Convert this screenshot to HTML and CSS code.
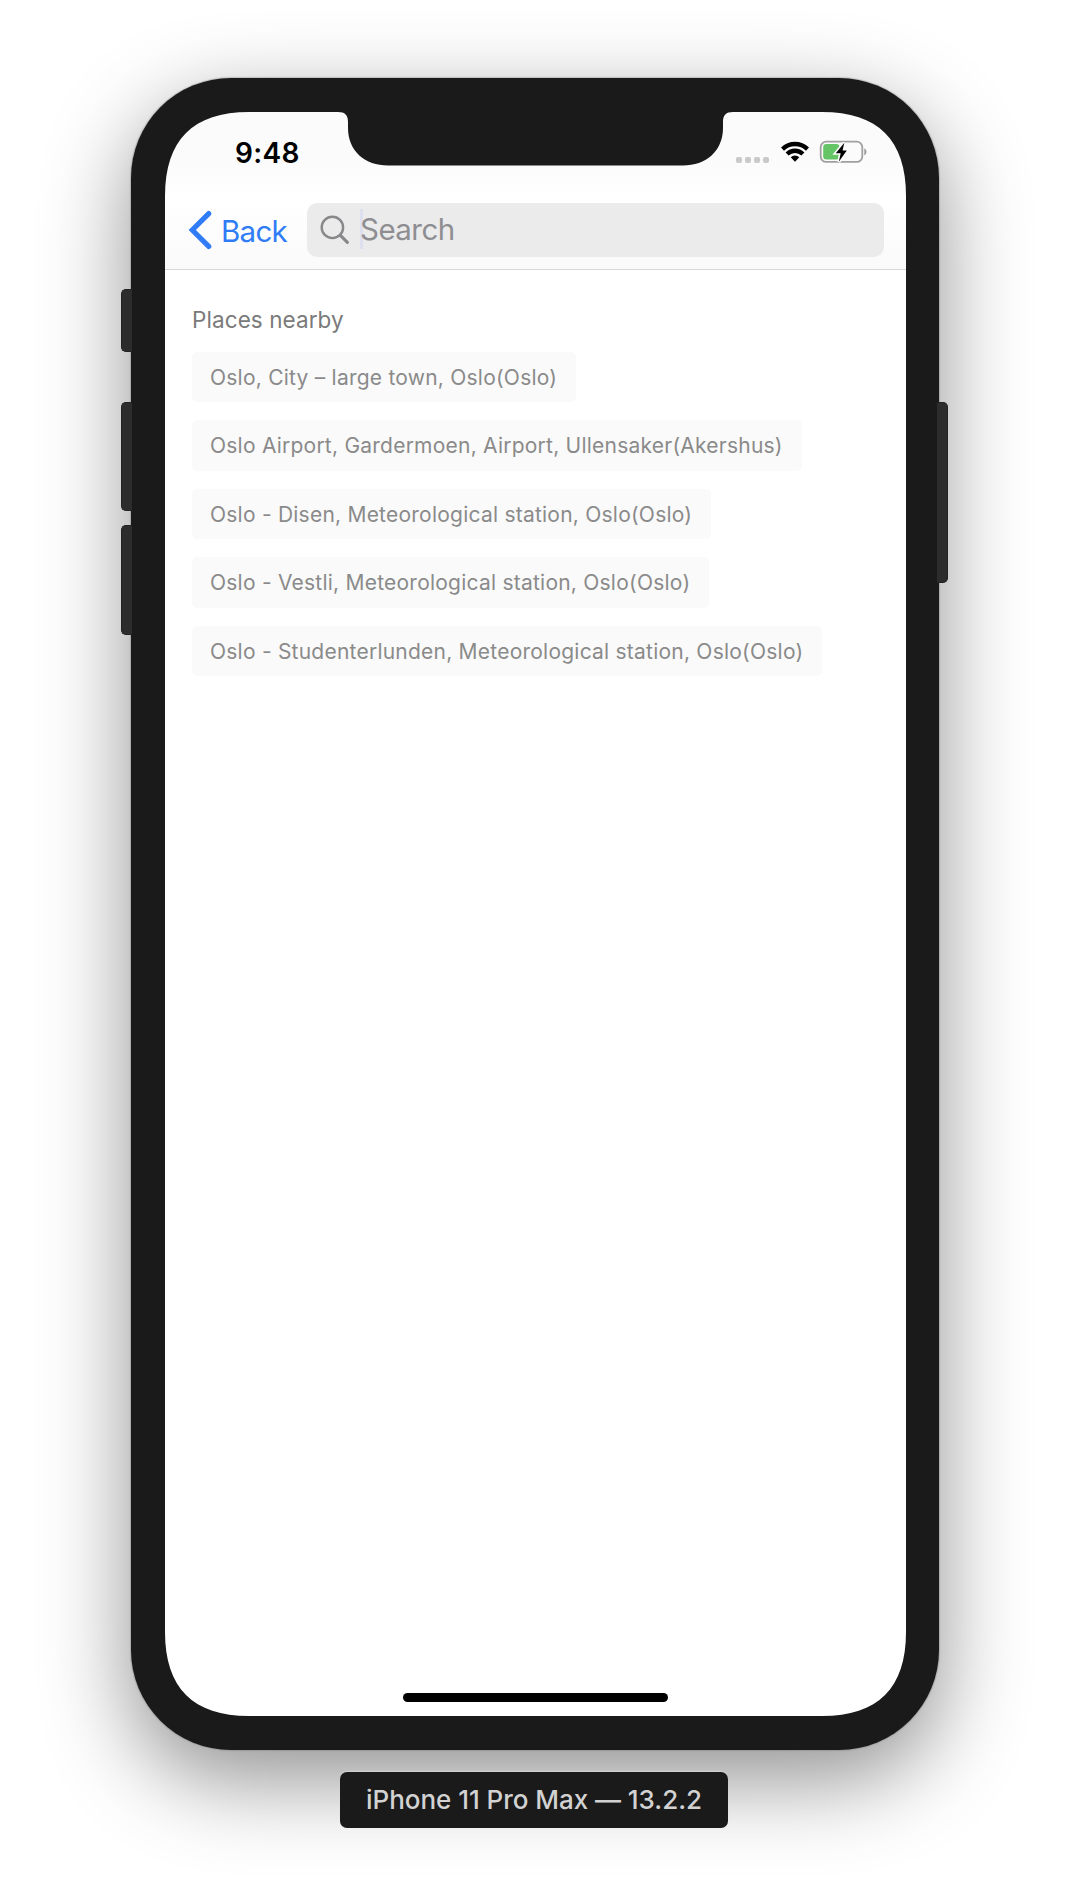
FILE: index.html
```html
<!DOCTYPE html>
<html lang="en">
<head>
<meta charset="utf-8">
<title>Search</title>
<link rel="stylesheet" href="styles.css">
</head>
<body>
<div class="phone">
  <span class="key mute"></span>
  <span class="key volume-up"></span>
  <span class="key volume-down"></span>
  <span class="key power"></span>
  <main class="screen">
    <header class="header">
      <div class="status">
        <span class="time">9:48</span>
        <div class="indicators">
          <span class="signal"><i></i><i></i><i></i><i></i></span>
          <svg class="wifi" width="30" height="22" viewBox="0 0 30 22">
            <path d="M1 7.5A20 20 0 0 1 29 7.5L26 10.7A16 16 0 0 0 4 10.7Z"/>
            <path d="M5.6 12.4A13.3 13.3 0 0 1 24.4 12.4L21.4 15.6A9.2 9.2 0 0 0 8.6 15.6Z"/>
            <path d="M10.7 17.3A6.3 6.3 0 0 1 19.3 17.3L15 21.8Z"/>
          </svg>
          <svg class="battery" width="48" height="24" viewBox="0 0 48 24">
            <rect x="1.7" y="1.7" width="41.6" height="20.2" rx="5.5" fill="none" stroke="#a0a0a0" stroke-width="1.8"/>
            <path d="M45.3 8.2Q47.5 9.4 47.5 11.8T45.3 15.4Z" fill="#9a9a9a"/>
            <rect x="4.2" y="4.1" width="16.3" height="15.4" rx="3.2" fill="#65c466"/>
            <path d="M25.3 2.8 16.8 13.2H21.7L19.8 21.8 27.8 10.5H23.6Z" fill="#000" stroke="#fcfcfc" stroke-width="3.2" paint-order="stroke"/>
          </svg>
        </div>
      </div>
      <div class="navbar">
        <a class="back">
          <svg width="24" height="40" viewBox="0 0 24 40"><path d="M20.7 3.6 4.3 20 20.7 36.4" fill="none" stroke="#2f7cf6" stroke-width="5.2" stroke-linecap="round"/></svg>
          <span>Back</span>
        </a>
        <div class="search">
          <svg width="30" height="30" viewBox="0 0 30 30" fill="none" stroke="#88888b" stroke-linecap="round"><circle cx="12.4" cy="12.4" r="10.7" stroke-width="2.4"/><path d="m20.4 20.4 7 7" stroke-width="3.1"/></svg>
          <span class="placeholder">Search</span>
        </div>
      </div>
    </header>
    <section class="places">
      <h1 class="title">Places nearby</h1>
      <ul class="list">
        <li>Oslo, City – large town, Oslo(Oslo)</li>
        <li>Oslo Airport, Gardermoen, Airport, Ullensaker(Akershus)</li>
        <li>Oslo - Disen, Meteorological station, Oslo(Oslo)</li>
        <li>Oslo - Vestli, Meteorological station, Oslo(Oslo)</li>
        <li>Oslo - Studenterlunden, Meteorological station, Oslo(Oslo)</li>
      </ul>
    </section>
    <div class="home-bar"></div>
  </main>
  <svg class="bezel" width="741" height="1604" viewBox="0 0 741 1604" fill="#1a1a1a">
    <path d="M0 0H84C28 0 0 28 0 84ZM741 0H657C713 0 741 28 741 84ZM0 1604H84C28 1604 0 1576 0 1520ZM741 1604H657C713 1604 741 1576 741 1520Z"/>
    <path d="M173 0C180 0 183 3 183 10V16C183 39 200 53.5 223 53.5H518C541 53.5 558 39 558 16V10C558 3 561 0 568 0Z"/>
  </svg>
</div>
<div class="device-label"><span>iPhone 11 Pro Max — 13.2.2</span></div>
</body>
</html>
```

FILE: styles.css
```css
* { box-sizing: border-box; }
body {
  margin: 0;
  height: 1900px;
  padding-top: 78px;
  background: #fff;
  font-family: Inter, "Liberation Sans", sans-serif;
  display: flex;
  flex-direction: column;
  align-items: center;
  overflow: hidden;
}
.phone {
  position: relative;
  flex: none;
  width: 808px;
  height: 1672px;
  padding: 34px 33px 34px 34px;
  border-radius: 100px;
  background: #1a1a1a;
  box-shadow: 0 0 1px 1px rgba(120, 120, 120, .35), 0 29px 88px rgba(0, 0, 0, .44);
}
.key {
  position: absolute;
  z-index: 1;
  left: -10px;
  width: 11px;
  border: 1px solid #222;
  border-right: 0;
  border-radius: 5px 0 0 5px;
  background: #2c2c2c;
}
.mute { top: 211px; height: 63px; }
.volume-up { top: 324px; height: 109px; }
.volume-down { top: 447px; height: 110px; }
.power {
  top: 324px;
  left: auto;
  right: -9px;
  width: 11px;
  height: 181px;
  border: 1px solid #222;
  border-left: 0;
  border-radius: 0 5px 5px 0;
}
.screen {
  height: 1604px;
  display: flex;
  flex-direction: column;
  background: #fff;
}
.bezel { position: absolute; left: 34px; top: 34px; }
.header {
  height: 158px;
  border-bottom: 1px solid #d9d9d9;
  background: linear-gradient(#fbfbfb 0, #fbfbfb 50px, #fff 90px, #fdfdfd 115px, #fafafa 157px);
}
.status {
  height: 91px;
  padding: 24px 39px 0 70px;
  display: flex;
  justify-content: space-between;
  align-items: flex-start;
}
.time { font-size: 28px; line-height: 34px; font-weight: 600; letter-spacing: .3px; }
.indicators { display: flex; align-items: flex-start; padding-top: 4px; }
.signal { display: flex; gap: 3px; padding: 17px 11px 0 0; }
.signal i { width: 6px; height: 6px; border-radius: 2px; background: #c9c9c9; }
.wifi { margin-right: 9px; }
.navbar { display: flex; padding: 0 22px 0 23px; }
.back {
  width: 119px;
  height: 54px;
  display: flex;
  align-items: center;
  gap: 9px;
  color: #2f7cf6;
  font-size: 29.5px;
  letter-spacing: -.7px;
}
.back span { padding-top: 2px; }
.search {
  flex: 1;
  height: 54px;
  padding-left: 13px;
  display: flex;
  align-items: center;
  gap: 10px;
  border-radius: 10px;
  background: #ebebeb;
}
.placeholder {
  margin-bottom: 2px;
  color: #8e8e92;
  font-size: 29.5px;
  line-height: 40px;
  letter-spacing: -.55px;
  background: linear-gradient(#dfe0ef, #dfe0ef) 0 0 / 3px 100% no-repeat;
}
.places { flex: 1; padding: 34px 27px 0; }
.title {
  margin: 0 0 15.5px;
  color: #7a7a7a;
  font-size: 22.5px;
  line-height: 32px;
  font-weight: 400;
  letter-spacing: .08px;
}
.list {
  margin: 0;
  padding: 0;
  list-style: none;
  display: flex;
  flex-direction: column;
  align-items: flex-start;
  gap: 18px;
}
.list li {
  height: 50.5px;
  padding: 0 19px 0 18px;
  border-radius: 5px;
  background: #fafafa;
  color: #8a8a8a;
  font-size: 21px;
  line-height: 51.5px;
  letter-spacing: .23px;
  white-space: nowrap;
}
.home-bar {
  width: 265px;
  height: 9px;
  margin: 0 auto 14.5px;
  border-radius: 5px;
  background: #000;
}
.device-label {
  position: relative;
  flex: none;
  width: 388px;
  height: 56px;
  margin: 22px 2px 0 0;
  border-radius: 7px;
  background: #1a1a1a;
  box-shadow: 0 -1px 1px rgba(220, 220, 220, .7);
  color: #d2d2d2;
  font-size: 26px;
  line-height: 56px;
  font-weight: 500;
  letter-spacing: -.04px;
  text-align: center;
  white-space: nowrap;
}
```
